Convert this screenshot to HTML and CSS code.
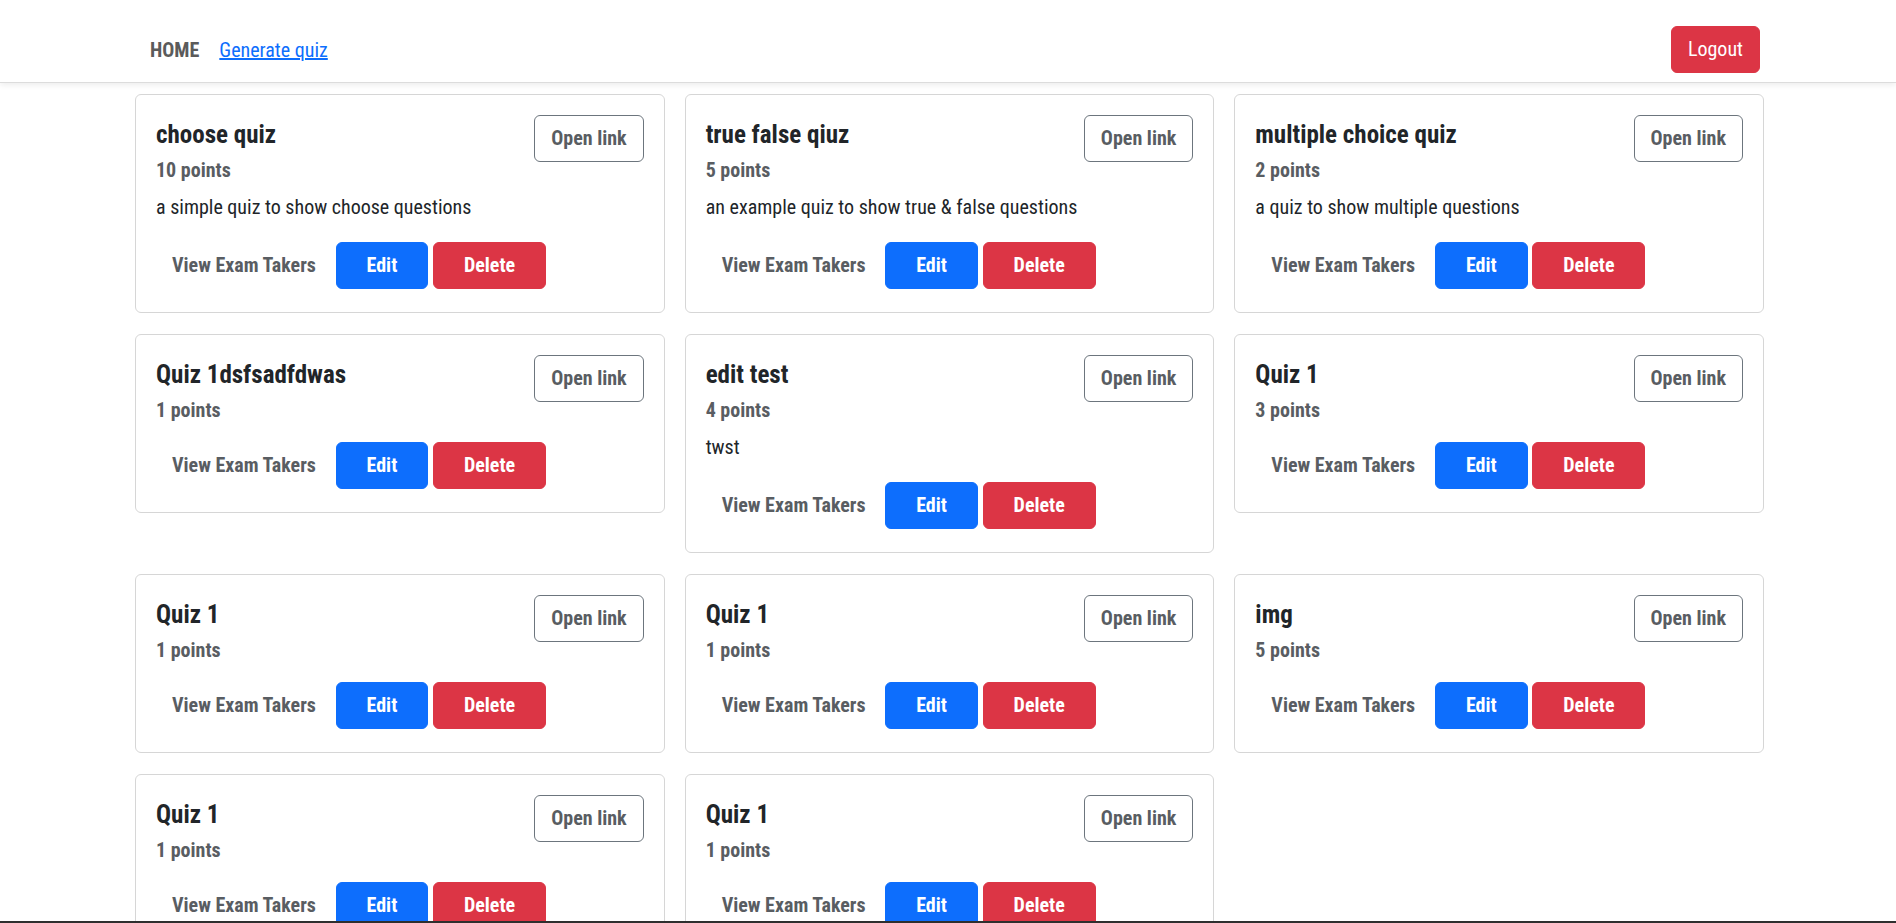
FILE: index.html
```html
<!DOCTYPE html>
<html lang="en">
<head>
<meta charset="utf-8">
<title>Quizzes</title>
<link rel="stylesheet" href="styles.css">
</head>
<body>
<nav class="navbar">
  <div class="nav-inner">
    <div class="nav-links">
      <a class="nav-home" href="#">HOME</a>
      <a class="nav-link" href="#">Generate quiz</a>
    </div>
    <button class="btn btn-logout">Logout</button>
  </div>
</nav>

<main class="grid">
  <div class="card">
    <div class="card-head">
      <div><h4 class="title">choose quiz</h4><h5 class="points">10 points</h5></div>
      <button class="btn btn-outline">Open link</button>
    </div>
    <p class="desc">a simple quiz to show choose questions</p>
    <div class="actions"><button class="btn btn-link">View Exam Takers</button> <button class="btn btn-edit">Edit</button> <button class="btn btn-delete">Delete</button></div>
  </div>
  <div class="card">
    <div class="card-head">
      <div><h4 class="title">true false qiuz</h4><h5 class="points">5 points</h5></div>
      <button class="btn btn-outline">Open link</button>
    </div>
    <p class="desc">an example quiz to show true &amp; false questions</p>
    <div class="actions"><button class="btn btn-link">View Exam Takers</button> <button class="btn btn-edit">Edit</button> <button class="btn btn-delete">Delete</button></div>
  </div>
  <div class="card">
    <div class="card-head">
      <div><h4 class="title">multiple choice quiz</h4><h5 class="points">2 points</h5></div>
      <button class="btn btn-outline">Open link</button>
    </div>
    <p class="desc">a quiz to show multiple questions</p>
    <div class="actions"><button class="btn btn-link">View Exam Takers</button> <button class="btn btn-edit">Edit</button> <button class="btn btn-delete">Delete</button></div>
  </div>

  <div class="card">
    <div class="card-head">
      <div><h4 class="title">Quiz 1dsfsadfdwas</h4><h5 class="points">1 points</h5></div>
      <button class="btn btn-outline">Open link</button>
    </div>
    <div class="actions"><button class="btn btn-link">View Exam Takers</button> <button class="btn btn-edit">Edit</button> <button class="btn btn-delete">Delete</button></div>
  </div>
  <div class="card">
    <div class="card-head">
      <div><h4 class="title">edit test</h4><h5 class="points">4 points</h5></div>
      <button class="btn btn-outline">Open link</button>
    </div>
    <p class="desc">twst</p>
    <div class="actions"><button class="btn btn-link">View Exam Takers</button> <button class="btn btn-edit">Edit</button> <button class="btn btn-delete">Delete</button></div>
  </div>
  <div class="card">
    <div class="card-head">
      <div><h4 class="title">Quiz 1</h4><h5 class="points">3 points</h5></div>
      <button class="btn btn-outline">Open link</button>
    </div>
    <div class="actions"><button class="btn btn-link">View Exam Takers</button> <button class="btn btn-edit">Edit</button> <button class="btn btn-delete">Delete</button></div>
  </div>

  <div class="card">
    <div class="card-head">
      <div><h4 class="title">Quiz 1</h4><h5 class="points">1 points</h5></div>
      <button class="btn btn-outline">Open link</button>
    </div>
    <div class="actions"><button class="btn btn-link">View Exam Takers</button> <button class="btn btn-edit">Edit</button> <button class="btn btn-delete">Delete</button></div>
  </div>
  <div class="card">
    <div class="card-head">
      <div><h4 class="title">Quiz 1</h4><h5 class="points">1 points</h5></div>
      <button class="btn btn-outline">Open link</button>
    </div>
    <div class="actions"><button class="btn btn-link">View Exam Takers</button> <button class="btn btn-edit">Edit</button> <button class="btn btn-delete">Delete</button></div>
  </div>
  <div class="card">
    <div class="card-head">
      <div><h4 class="title">img</h4><h5 class="points">5 points</h5></div>
      <button class="btn btn-outline">Open link</button>
    </div>
    <div class="actions"><button class="btn btn-link">View Exam Takers</button> <button class="btn btn-edit">Edit</button> <button class="btn btn-delete">Delete</button></div>
  </div>

  <div class="card">
    <div class="card-head">
      <div><h4 class="title">Quiz 1</h4><h5 class="points">1 points</h5></div>
      <button class="btn btn-outline">Open link</button>
    </div>
    <div class="actions"><button class="btn btn-link">View Exam Takers</button> <button class="btn btn-edit">Edit</button> <button class="btn btn-delete">Delete</button></div>
  </div>
  <div class="card">
    <div class="card-head">
      <div><h4 class="title">Quiz 1</h4><h5 class="points">1 points</h5></div>
      <button class="btn btn-outline">Open link</button>
    </div>
    <div class="actions"><button class="btn btn-link">View Exam Takers</button> <button class="btn btn-edit">Edit</button> <button class="btn btn-delete">Delete</button></div>
  </div>
</main>
<div class="bottom-line"></div>
</body>
</html>
```
FILE: styles.css
```css
* { box-sizing: border-box; }

body {
  margin: 0;
  background: #fff;
  color: #212529;
  font-family: "Roboto Condensed", Roboto, "Liberation Sans Narrow", sans-serif;
  font-stretch: condensed;
}

.navbar {
  background: #fff;
  padding: 26px 0 9px;
  border-bottom: 1px solid #dcdcdc;
  box-shadow: 0 2px 6px rgba(0, 0, 0, 0.08);
}

.nav-inner {
  margin: 0 136px;
  display: flex;
  align-items: center;
  justify-content: space-between;
}

.nav-links {
  display: flex;
  align-items: center;
  gap: 20px;
  padding-left: 14px;
}

.nav-home {
  font-size: 20px;
  font-weight: 700;
  color: #5b5b5b;
  text-decoration: none;
}

.nav-link {
  font-size: 20px;
  color: #0d6efd;
  text-decoration: underline;
}

.btn {
  font-family: inherit;
  font-stretch: condensed;
  font-size: 20px;
  line-height: 29px;
  padding: 8px 16px;
  border: 1px solid transparent;
  border-radius: 6px;
  background: transparent;
  cursor: pointer;
}

.btn-logout {
  background: #dc3545;
  border-color: #dc3545;
  color: #fff;
  font-weight: 400;
}

.grid {
  margin: 11px 0 0 135px;
  width: 1629px;
  display: grid;
  grid-template-columns: repeat(3, 1fr);
  column-gap: 20px;
  row-gap: 21px;
  align-items: start;
}

.card {
  border: 1px solid #d6d6d6;
  border-radius: 6px;
  padding: 20px;
  background: #fff;
}

.card-head {
  display: flex;
  justify-content: space-between;
  align-items: flex-start;
}

.title {
  margin: 4px 0 8px;
  font-size: 25px;
  line-height: 31px;
  font-weight: 700;
  color: #212529;
}

.points {
  margin: 0;
  font-size: 20px;
  line-height: 24px;
  font-weight: 700;
  color: #595d62;
}

.btn-outline {
  border-color: #6c757d;
  color: #595d62;
  font-weight: 700;
}

.desc {
  margin: 10px 0 0;
  font-size: 20px;
  line-height: 30px;
  color: #212529;
}

.actions {
  margin: 20px 0 3px;
}

.btn-link {
  padding: 8px 15px;
  color: #595d62;
  font-weight: 700;
}

.btn-edit {
  padding: 8px 30px;
  background: #0d6efd;
  border-color: #0d6efd;
  color: #fff;
  font-weight: 700;
}

.btn-delete {
  padding: 8px 30px;
  margin-left: 1px;
  background: #dc3545;
  border-color: #dc3545;
  color: #fff;
  font-weight: 700;
}

.bottom-line {
  position: fixed;
  left: 0;
  right: 0;
  bottom: 0;
  height: 2px;
  background: #2f2f2f;
}
```
